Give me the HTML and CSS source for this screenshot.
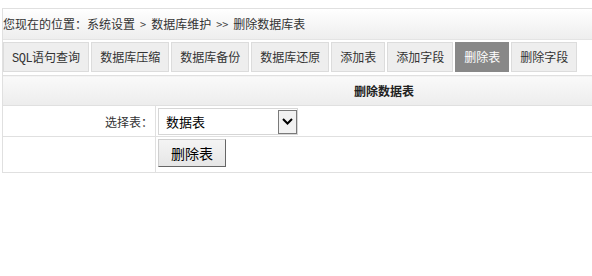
FILE: index.html
```html
<!DOCTYPE html>
<html lang="zh-CN">
<head>
<meta charset="utf-8">
<title>删除数据表</title>
<link rel="stylesheet" href="styles.css">
</head>
<body>
<div class="wrap">
  <div class="crumb">您现在的位置：系统设置<span class="sep">&gt;</span>数据库维护<span class="sep">&gt;&gt;</span>删除数据库表</div>
  <div class="tabs">
    <a class="tab"><span class="mono">SQL</span>语句查询</a>
    <a class="tab">数据库压缩</a>
    <a class="tab">数据库备份</a>
    <a class="tab">数据库还原</a>
    <a class="tab">添加表</a>
    <a class="tab">添加字段</a>
    <a class="tab active">删除表</a>
    <a class="tab">删除字段</a>
  </div>
  <table class="form">
    <tr class="head"><th colspan="2">删除数据表</th></tr>
    <tr class="row1">
      <td class="label">选择表：</td>
      <td class="field">
        <span class="selwrap">
          <select class="sel"><option>数据表</option></select>
          <span class="arrow"><svg width="11" height="7" viewBox="0 0 11 7"><path d="M1 1 L5.5 5.5 L10 1" fill="none" stroke="#000" stroke-width="2"/></svg></span>
        </span>
      </td>
    </tr>
    <tr class="row2">
      <td class="label"></td>
      <td class="field"><button class="btn">删除表</button></td>
    </tr>
  </table>
</div>
</body>
</html>
```
FILE: styles.css
```css
html, body { margin: 0; padding: 0; overflow: hidden; background: #fff; }
body { font-family: "Noto Sans CJK SC", "Liberation Sans", sans-serif; font-size: 12px; color: #333; }
.wrap { margin: 8px 0 0 2px; width: 762px; border-left: 1px solid #e0e0e0; }
.crumb {
  height: 30px; line-height: 30px; padding-left: 0;
  border-top: 1px solid #e0e0e0; border-bottom: 1px solid #e4e4e4;
  background: linear-gradient(#ffffff, #eeeeee);
  color: #333; white-space: nowrap;
}
.sep { display: inline-block; padding: 0 5px; font-size: 11px; color: #444; }
.tabs { display: flex; gap: 2px; padding: 2px 0 3px 0; }
.tab {
  display: block; height: 28px; line-height: 28px; padding: 0 8px;
  border: 1px solid #dcdcdc; background: #eeeeee; color: #333; white-space: nowrap;
}
.mono { font-family: "Liberation Mono", monospace; font-size: 12px; letter-spacing: -0.5px; }
.tab.active { background: #888888; border-color: #888888; color: #fff; }
.form { width: 762px; border-collapse: collapse; }
.form td, .form th { padding: 0; border-top: 1px solid #e0e0e0; border-bottom: 1px solid #e0e0e0; }
.head th { height: 29px; font-weight: bold; color: #222; background: linear-gradient(#fafafa, #ececec); text-align: center; }
.row1 td { height: 30px; }
.row2 td { height: 33px; }
.label { width: 150px; text-align: right; padding-right: 2px !important; border-right: 1px solid #e0e0e0; font-size: 12px; color: #333; }
.field { padding-left: 2px !important; vertical-align: middle; }
.row2 .field { vertical-align: top; padding-top: 2px !important; }
.selwrap { position: relative; display: inline-block; vertical-align: middle; }
.sel {
  appearance: none; -webkit-appearance: none; display: block;
  width: 140px; height: 27px; margin: 0; padding: 0 0 0 7px;
  border: 1px solid #d6d6d6; background: #fff; color: #000;
  font-family: "Noto Sans CJK SC", sans-serif; font-size: 13px;
}
.arrow {
  position: absolute; right: 1px; top: 2px; width: 17px; height: 22px;
  border: 1px solid #7a7a7a; background: #f2f2f2;
  display: flex; align-items: center; justify-content: center;
}
.btn {
  display: block; width: 68px; height: 28px; margin: 0; padding: 0;
  border: 1px solid #cfcfcf; border-right-color: #666; border-bottom-color: #666;
  background: linear-gradient(#f4f4f4, #e6e6e6); color: #000;
  font-family: "Noto Sans CJK SC", sans-serif; font-size: 14px;
}
```
